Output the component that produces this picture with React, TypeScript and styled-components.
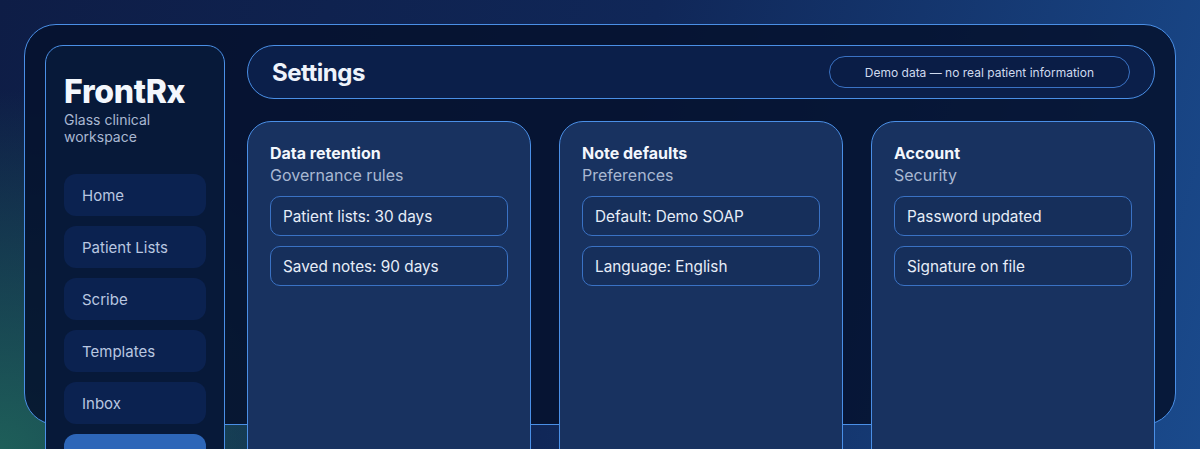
import React from "react";
import styled, { createGlobalStyle } from "styled-components";

const palette = {
  line: "#4a8fe6",
  lineSoft: "#3a72c4",
  text: "#f1f5fb",
  muted: "#a9b8d2",
  nav: "#b9c7e0",
  active: "#2d66b8",
};

const GlobalStyle = createGlobalStyle`
  html, body {
    margin: 0;
    padding: 0;
  }
  body {
    min-height: 100vh;
    font-family: Inter, "Noto Sans", "Liberation Sans", sans-serif;
    color: ${palette.text};
    background:
      radial-gradient(ellipse 420px 360px at 0% 100%, rgba(31, 98, 90, 0.95) 0%, rgba(31, 98, 90, 0) 100%),
      linear-gradient(105deg, #0e1d46 0%, #102758 50%, #1a4a8c 100%);
    background-attachment: fixed;
  }
  * {
    box-sizing: border-box;
  }
`;

const Shell = styled.div`
  margin: 24px;
  height: calc(100vh - 48px);
  padding: 20px;
  border: 1px solid ${palette.line};
  border-radius: 32px;
  background: rgba(5, 18, 45, 0.86);
  display: grid;
  grid-template-columns: 180px 1fr;
  gap: 22px;
  align-items: stretch;
`;

const Sidebar = styled.aside`
  border: 1px solid ${palette.line};
  border-radius: 18px;
  background: #071939;
  padding: 28px 18px 18px;
  display: flex;
  flex-direction: column;
`;

const Brand = styled.h1`
  margin: 0;
  font-size: 32px;
  line-height: 1.1;
  font-weight: 800;
  letter-spacing: -0.01em;
  color: #f3f7fd;
`;

const Tagline = styled.p`
  margin: 2px 0 0;
  font-size: 14px;
  line-height: 17px;
  color: ${palette.muted};
`;

const Nav = styled.nav`
  margin-top: 29px;
  display: flex;
  flex-direction: column;
  gap: 10px;
`;

const NavItem = styled.a<{ $active?: boolean }>`
  display: flex;
  align-items: center;
  height: 42px;
  padding: 0 18px;
  border-radius: 12px;
  font-size: 15px;
  color: ${(p) => (p.$active ? "#ffffff" : palette.nav)};
  background: ${(p) => (p.$active ? palette.active : "#0b2250")};
  text-decoration: none;
`;

const Main = styled.main`
  display: flex;
  flex-direction: column;
  gap: 22px;
  min-width: 0;
`;

const Header = styled.header`
  height: 54px;
  flex-shrink: 0;
  border: 1px solid ${palette.line};
  border-radius: 27px;
  background: #0b1f4a;
  padding: 0 24px;
  display: flex;
  align-items: center;
  justify-content: space-between;
`;

const PageTitle = styled.h2`
  margin: 0;
  font-size: 24px;
  font-weight: 700;
  letter-spacing: -0.02em;
  color: #eef3fb;
`;

const Badge = styled.span`
  height: 32px;
  padding: 0 35px;
  display: flex;
  align-items: center;
  border: 1px solid ${palette.lineSoft};
  border-radius: 999px;
  background: #0a1d46;
  font-size: 12px;
  color: #cfdaee;
`;

const Cards = styled.section`
  flex: 1;
  display: grid;
  grid-template-columns: repeat(3, 1fr);
  gap: 28px;
`;

const Card = styled.div`
  border: 1px solid ${palette.line};
  border-radius: 24px;
  background: #183260;
  padding: 21px 22px;
  min-height: 360px;
`;

const CardTitle = styled.h3`
  margin: 0;
  font-size: 16px;
  line-height: 20px;
  font-weight: 700;
  color: #f3f7fd;
`;

const CardSub = styled.p`
  margin: 1px 0 0;
  font-size: 16px;
  line-height: 22px;
  color: ${palette.muted};
`;

const List = styled.div`
  margin-top: 10px;
  display: flex;
  flex-direction: column;
  gap: 10px;
`;

const Row = styled.div`
  height: 40px;
  padding: 0 12px;
  display: flex;
  align-items: center;
  border: 1px solid ${palette.lineSoft};
  border-radius: 10px;
  background: #162f5b;
  font-size: 15.3px;
  color: #e6edf8;
`;

const navItems = ["Home", "Patient Lists", "Scribe", "Templates", "Inbox", "Settings"];

const sections = [
  { title: "Data retention", sub: "Governance rules", rows: ["Patient lists: 30 days", "Saved notes: 90 days"] },
  { title: "Note defaults", sub: "Preferences", rows: ["Default: Demo SOAP", "Language: English"] },
  { title: "Account", sub: "Security", rows: ["Password updated", "Signature on file"] },
];

const App: React.FC = () => {
  return (
    <>
      <GlobalStyle />
      <Shell>
        <Sidebar>
          <Brand>FrontRx</Brand>
          <Tagline>Glass clinical workspace</Tagline>
          <Nav>
            {navItems.map((item) => (
              <NavItem key={item} $active={item === "Settings"}>
                {item}
              </NavItem>
            ))}
          </Nav>
        </Sidebar>
        <Main>
          <Header>
            <PageTitle>Settings</PageTitle>
            <Badge>Demo data — no real patient information</Badge>
          </Header>
          <Cards>
            {sections.map((s) => (
              <Card key={s.title}>
                <CardTitle>{s.title}</CardTitle>
                <CardSub>{s.sub}</CardSub>
                <List>
                  {s.rows.map((r) => (
                    <Row key={r}>{r}</Row>
                  ))}
                </List>
              </Card>
            ))}
          </Cards>
        </Main>
      </Shell>
    </>
  );
};

export default App;
